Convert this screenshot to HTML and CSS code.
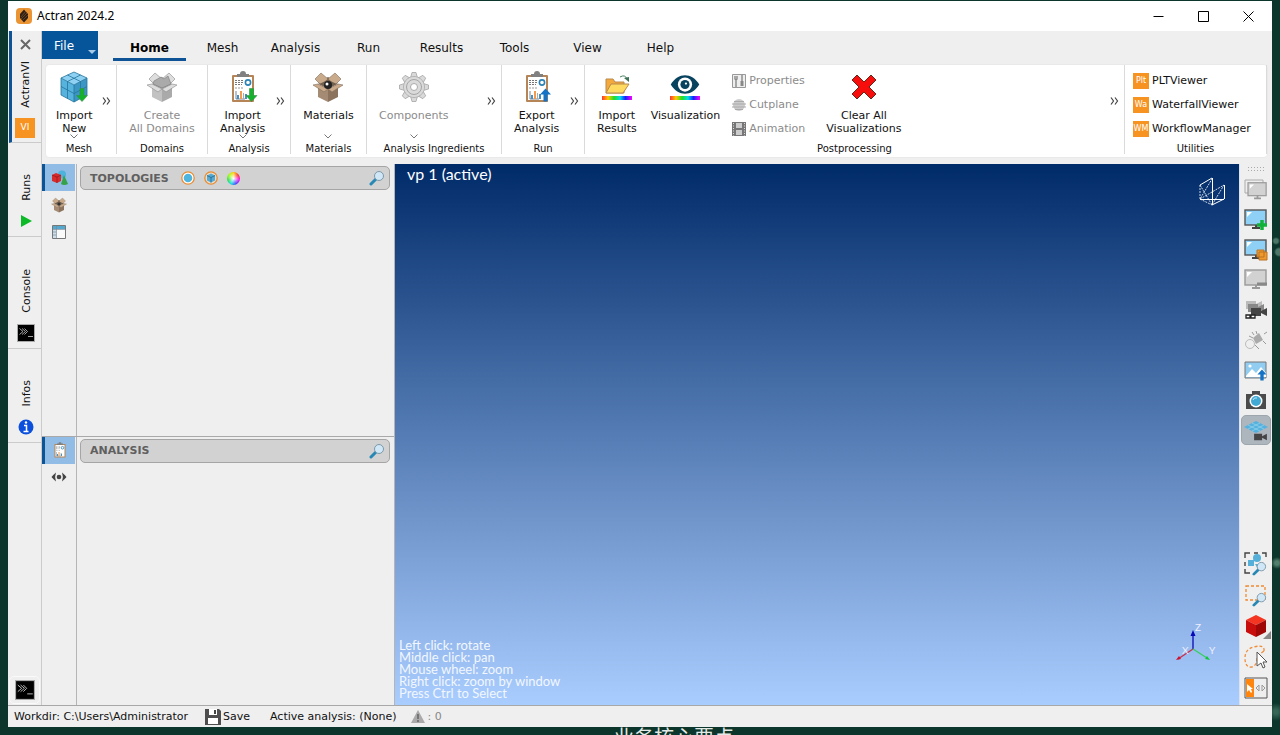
FILE: index.html
```html
<!DOCTYPE html>
<html lang="en">
<head>
<meta charset="utf-8">
<title>Actran 2024.2</title>
<link rel="stylesheet" href="styles.css">
</head>
<body>
<svg class="defs" aria-hidden="true">
  <defs>
    <linearGradient id="rainbow"><stop offset="0" stop-color="#f33"/><stop offset=".2" stop-color="#fc0"/><stop offset=".4" stop-color="#2d2"/><stop offset=".6" stop-color="#0de"/><stop offset=".78" stop-color="#12f"/><stop offset="1" stop-color="#f0f"/></linearGradient>
    <symbol id="box" viewBox="0 0 32 32">
      <path class="b-in" d="M6 12 16 6l10 6-10 5z"/>
      <path class="b-flap" d="M3 8 9 2l7 6-7 6zM29 8l-6-6-7 6 7 6z"/>
      <path class="b-in" d="M7 13 16 9l9 4-9 5z"/>
      <path class="b-body" d="M6 13l10 5v13L6 26z"/><path class="b-side" d="M26 13l-10 5v13l10-5z"/>
      <path class="b-flap" d="M6 13l10 5-4 3-11-7zM26 13l-10 5 4 3 11-7z"/>
    </symbol>
    <symbol id="clip" viewBox="0 0 32 32">
      <rect x="5" y="4" width="22" height="27" rx="1" fill="#b58457"/><rect x="7" y="6" width="18" height="23" fill="#fff"/>
      <path d="M10 6V3h3a3 3 0 0 1 6 0h3v3z" fill="#808080"/>
      <path d="M8 9.500h8M8 11.500h8M8 13.500h7" stroke="#777" stroke-dasharray="2 1"/><path d="M8 17h9" stroke="#999" stroke-dasharray="2 1"/>
      <circle cx="21" cy="11.500" r="2.600" fill="none" stroke="#2b83b8" stroke-width="1.600"/>
      <path d="M9 20v8h9" fill="none" stroke="#567" stroke-width=".8"/><path d="M11 24v4M19 23v5" stroke="#4790bd" stroke-width="2"/><path d="M14 20v8" stroke="#f29b4e" stroke-width="2"/><path d="M16.500 22v6" stroke="#aaa"/>
    </symbol>
    <symbol id="down" viewBox="0 0 12 14"><path d="M4 .5h4v7h3.500L6 13.500.5 7.500H4z" fill="#12b22c" stroke="#3a8b48" stroke-width=".6"/></symbol>
    <symbol id="up" viewBox="0 0 12 14"><path d="M4 13.500h4v-7h3.500L6 .5.5 6.500H4z" fill="#1473c4"/></symbol>
    <symbol id="chev" viewBox="0 0 8 5"><path d="M.5.5 4 4 7.500.5" fill="none" stroke="#777"/></symbol>
    <symbol id="more" viewBox="0 0 9 8"><path d="M1 .5 3.500 4 1 7.500M5 .5 7.500 4 5 7.500" fill="none" stroke="#444" stroke-width="1.200"/></symbol>
    <symbol id="glass" viewBox="0 0 16 16"><path d="M7 9 2 14" stroke="#2788b5" stroke-width="3" stroke-linecap="round"/><circle cx="10" cy="6" r="4.500" fill="#cfe7f7" stroke="#7d98a8"/></symbol>
    <symbol id="term" viewBox="0 0 18 18"><rect x=".5" y=".5" width="17" height="17" fill="#000" stroke="#aaa"/><path d="M2.500 4.500 6 7.500l-3.500 3M5 4.500l3.500 3L5 10.500M7.500 4.500l3 3-3 3M11 12.500h5" fill="none" stroke="#ccc" stroke-width=".8"/></symbol>
    <symbol id="eye" viewBox="0 0 30 20"><path d="M0 10C8-3 22-3 30 10 22 23 8 23 0 10z" fill="#07425e"/><circle cx="15" cy="10" r="7.500" fill="#fff"/><circle cx="15" cy="10" r="4.800" fill="#07425e"/><circle cx="16" cy="9" r="1.200" fill="#fff"/></symbol>
    <symbol id="screen" viewBox="0 0 24 22"><path d="M8 20h8M12 16v4" stroke="#444" stroke-width="2"/><rect x="1" y="2" width="21" height="15" fill="#8fd0f7" stroke="#555" stroke-width="1.400"/><path d="M3 4h5L3 9z" fill="#fff"/></symbol>
    <symbol id="gscreen" viewBox="0 0 24 22"><path d="M8 20h8M12 16v4" stroke="#999" stroke-width="2"/><rect x="1" y="2" width="21" height="15" fill="#d2d2d2" stroke="#999" stroke-width="1.400"/><path d="M3 4h5L3 9z" fill="#fff"/></symbol>
    <symbol id="cam" viewBox="0 0 16 10"><path d="M0 1h10v3l6-3v8l-6-3v3H0z"/></symbol>
  </defs>
</svg>
<div class="desktop">
<div class="window">
  <header class="titlebar">
    <svg class="i16" viewBox="0 0 16 16"><rect width="16" height="16" rx="4" fill="#eb9433"/><path d="M8 1.500 12 6v4l-4 4.500L4 10V6z" fill="#302118"/><path d="m5 9 5-6M5 11l6-6M7 12l5-5" stroke="#8a5a25" stroke-width=".6"/></svg>
    <h1>Actran 2024.2</h1>
    <div class="winbtns">
      <button aria-label="Minimize"><svg viewBox="0 0 11 11"><path d="M.5 5.500h10"/></svg></button>
      <button aria-label="Maximize"><svg viewBox="0 0 11 11"><path d="M.5.5h10v10H.5z"/></svg></button>
      <button aria-label="Close"><svg viewBox="0 0 11 11"><path d="m.5.5 10 10M10.500.5l-10 10"/></svg></button>
    </div>
  </header>
  <div class="body">
    <nav class="rail">
      <div class="railtab active">
        <button class="close" aria-label="Close tab"><svg viewBox="0 0 11 11"><path d="m1 1 9 9M10 1l-9 9" stroke="#666" stroke-width="2"/></svg></button>
        <button class="railbtn"><span class="vert">ActranVI</span><span class="badge">VI</span></button>
      </div>
      <button class="railtab"><span class="vert">Runs</span><svg class="i18" viewBox="0 0 18 18"><path d="m4 3 11 6-11 6z" fill="#0cba28"/></svg></button>
      <button class="railtab tall"><span class="vert">Console</span><svg class="i18"><use href="#term"/></svg></button>
      <button class="railtab"><span class="vert">Infos</span><svg class="i18" viewBox="0 0 18 18"><circle cx="9" cy="9" r="7.500" fill="#0b4fdc"/><path d="M7 7.500h2.500V13M6.500 13.500h5" fill="none" stroke="#fff" stroke-width="1.500"/><circle cx="9" cy="4.500" r="1.200" fill="#fff"/></svg></button>
      <button class="railterm" aria-label="Terminal"><svg class="i20"><use href="#term"/></svg></button>
    </nav>
    <div class="main">
      <nav class="tabs">
        <button class="file">File<svg viewBox="0 0 8 4"><path d="M0 0h8L4 4z" fill="#a9cbea"/></svg></button>
        <button class="tab on">Home</button><button class="tab">Mesh</button><button class="tab">Analysis</button><button class="tab">Run</button><button class="tab">Results</button><button class="tab">Tools</button><button class="tab">View</button><button class="tab">Help</button>
      </nav>
      <div class="ribbon">
        <section class="group g-mesh">
          <div class="tools">
            <button class="big"><svg class="i32" viewBox="0 0 32 32"><path d="M16 1 29 7 16 14 3 7z" fill="#8fd1f2"/><path d="M3 7l13 7v17L3 24z" fill="#55b3de"/><path d="M29 7 16 14v17l13-7z" fill="#3b96c4"/><path d="M16 1 29 7v17l-13 7-13-7V7zM3 7l13 7 13-7M16 14v17M9.500 4l13 6.500v17M22.500 4l-13 6.500v17M3 15.500l13 7 13-7" fill="none" stroke="#25759c" stroke-width=".8"/><use href="#down" x="18" y="17" width="12" height="14"/></svg><span>Import<br>New</span><svg class="chev"><use href="#chev"/></svg></button>
            <button class="more" aria-label="More mesh tools"><svg><use href="#more"/></svg></button>
          </div><h2>Mesh</h2>
        </section>
        <section class="group g-dom">
          <div class="tools"><button class="big dim" disabled><svg class="i32 graybox" viewBox="0 0 32 32"><use href="#box"/><path d="m8 10 7-4 3 2 4-3 3 8-9 4-9-4z" fill="#aaa" stroke="#777" stroke-width=".6"/></svg><span>Create<br>All Domains</span></button></div><h2>Domains</h2>
        </section>
        <section class="group g-ana">
          <div class="tools">
            <button class="big"><svg class="i32" viewBox="0 0 32 32"><use href="#clip"/><use href="#down" x="18" y="17" width="13" height="14"/></svg><span>Import<br>Analysis</span><svg class="chev"><use href="#chev"/></svg></button>
            <button class="more" aria-label="More analysis tools"><svg><use href="#more"/></svg></button>
          </div><h2>Analysis</h2>
        </section>
        <section class="group g-mat">
          <div class="tools"><button class="big"><svg class="i32 brownbox" viewBox="0 0 32 32"><use href="#box"/><circle cx="16" cy="14" r="4" fill="#222"/><circle cx="15" cy="13" r="1.500" fill="#fff"/></svg><span>Materials</span><svg class="chev"><use href="#chev"/></svg></button></div><h2>Materials</h2>
        </section>
        <section class="group g-ing">
          <div class="tools">
            <button class="big dim" disabled><svg class="i32" viewBox="0 0 32 32"><g fill="#dadada" stroke="#a5a5a5" stroke-width=".8"><path id="tooth" d="M12.500 7 14 1.500h4L19.500 7z"/><use href="#tooth" transform="rotate(45 16 16)"/><use href="#tooth" transform="rotate(90 16 16)"/><use href="#tooth" transform="rotate(135 16 16)"/><use href="#tooth" transform="rotate(180 16 16)"/><use href="#tooth" transform="rotate(225 16 16)"/><use href="#tooth" transform="rotate(270 16 16)"/><use href="#tooth" transform="rotate(315 16 16)"/><circle cx="16" cy="16" r="10.500"/></g><circle cx="16" cy="16" r="10" fill="#dadada"/><circle cx="16" cy="16" r="7.500" fill="none" stroke="#a5a5a5"/><circle cx="16" cy="16" r="3.500" fill="#fff" stroke="#aaa"/></svg><span>Components</span><svg class="chev"><use href="#chev"/></svg></button>
            <button class="more" aria-label="More ingredients"><svg><use href="#more"/></svg></button>
          </div><h2>Analysis Ingredients</h2>
        </section>
        <section class="group g-run">
          <div class="tools">
            <button class="big"><svg class="i32" viewBox="0 0 32 32"><use href="#clip"/><use href="#up" x="18" y="17" width="13" height="14"/></svg><span>Export<br>Analysis</span></button>
            <button class="more" aria-label="More run tools"><svg><use href="#more"/></svg></button>
          </div><h2>Run</h2>
        </section>
        <section class="group g-post">
          <div class="tools">
            <button class="big"><svg class="i32" viewBox="0 0 32 32"><path d="M5 8h7l2 3h9v11H5z" fill="#f4a93c" stroke="#b98a4c"/><path d="m10 13h18l-6 9H5z" fill="#ffda61" stroke="#b98a4c"/><path d="M19 6q5-3 7 2" fill="none" stroke="#4a8060"/><path d="m23 7 5-1v5z" fill="#3d7255"/><rect x="1" y="25" width="30" height="4" fill="url(#rainbow)"/></svg><span>Import<br>Results</span></button>
            <button class="big vis"><svg class="i32" viewBox="0 0 32 32"><use href="#eye" x="1" y="4" width="30" height="19"/><rect x="1" y="25" width="30" height="4" fill="url(#rainbow)"/></svg><span>Visualization</span></button>
            <div class="stack">
              <button class="dim" disabled><svg class="i14" viewBox="0 0 14 14"><path d="M.5.5h13v13H.5z" fill="#eee" stroke="#999"/><path d="M4 6v7M10 1v6M3 2v3l1 1 1-1V2" fill="none" stroke="#888" stroke-width="1.400"/><path d="M10 7v5" stroke="#888" stroke-width="3"/></svg>Properties</button>
              <button class="dim" disabled><svg class="i14" viewBox="0 0 14 14"><circle cx="7" cy="7" r="6" fill="#ccc"/><path d="M2 3.500h10M0 6h14M0 9h14M3 11.500h8" stroke="#aaa" stroke-width="1.200"/></svg>Cutplane</button>
              <button class="dim" disabled><svg class="i14" viewBox="0 0 14 14"><path d="M0 0h14v14H0z" fill="#777"/><path d="M4 1h6v5H4zM4 8h6v5H4z" fill="#ccc"/><path d="M1.500 1v13M12.500 1v13" stroke="#ddd" stroke-dasharray="1 1.500"/></svg>Animation</button>
            </div>
            <button class="big"><svg class="i32" viewBox="0 0 32 32"><path d="m9 4 7 7 7-7 5 5-7 7 7 7-5 5-7-7-7 7-5-5 7-7-7-7z" fill="#f80d0d" stroke="#5d2b1c"/></svg><span>Clear All<br>Visualizations</span></button>
            <button class="more" aria-label="More postprocessing tools"><svg><use href="#more"/></svg></button>
          </div><h2>Postprocessing</h2>
        </section>
        <section class="group g-util">
          <div class="tools"><div class="stack">
            <button><span class="badge sm">Plt</span>PLTViewer</button>
            <button><span class="badge sm">Wa</span>WaterfallViewer</button>
            <button><span class="badge sm">WM</span>WorkflowManager</button>
          </div></div><h2>Utilities</h2>
        </section>
      </div>
      <div class="work">
        <div class="panels">
          <section class="panel">
            <div class="ptabs">
              <button class="ptab sel" aria-label="Topologies"><svg class="i16" viewBox="0 0 16 16"><circle cx="10" cy="4.500" r="4" fill="#4db2dc"/><path d="m0 5 4-2 5 2v6l-4 2-5-2z" fill="#d92b2b"/><path d="m0 5 5 2v6M5 7l4-2" fill="none" stroke="#8d1720" stroke-width=".7"/><path d="m12 5 4 9q-4 2-7 0z" fill="#35a148"/></svg></button>
              <button class="ptab" aria-label="Materials"><svg class="i16 brownbox" viewBox="0 0 32 32"><use href="#box"/><circle cx="16" cy="14" r="3" fill="#333"/></svg></button>
              <button class="ptab" aria-label="Table"><svg class="i16" viewBox="0 0 16 16"><path d="M1.500 1.500h13v13h-13z" fill="#fafafa" stroke="#777"/><path d="M2 2h12v3H2z" fill="#54a8cf"/><path d="M2 5h3v9H2z" fill="#cdddeb"/><path d="M5.500 2v12M2 5.500h12M2 8h3M2 11h3" stroke="#789" stroke-width=".7"/></svg></button>
            </div>
            <div class="pcontent"><div class="phead"><h2>TOPOLOGIES</h2>
              <button aria-label="Surfaces"><svg class="i14" viewBox="0 0 14 14"><circle cx="7" cy="7" r="6.200" fill="#fff" stroke="#e88c32" stroke-width="1.300"/><circle cx="7" cy="7" r="4.300" fill="#4fb4de"/></svg></button>
              <button aria-label="Volumes"><svg class="i14" viewBox="0 0 14 14"><circle cx="7" cy="7" r="6.200" fill="#e9ddcd" stroke="#e88c32" stroke-width="1.300"/><path d="m7 2.500 4 2v5l-4 2-4-2v-5z" fill="#55aad4"/><path d="m3 4.500 4 2 4-2M7 6.500v5" fill="none" stroke="#226688" stroke-width=".8"/></svg></button>
              <button aria-label="Colors"><span class="wheel"></span></button>
              <button class="find" aria-label="Search topologies"><svg class="i16"><use href="#glass"/></svg></button></div></div>
          </section>
          <section class="panel second">
            <div class="ptabs">
              <button class="ptab sel" aria-label="Analysis"><svg class="i16"><use href="#clip"/></svg></button>
              <button class="ptab" aria-label="Visibility"><svg class="i16" viewBox="0 0 16 16"><path d="M5 3.500Q2.500 5.500.5 8q2 2.500 4.500 4.500-1.800-4.500 0-9zM11 3.500q2.500 2 4.500 4.500-2 2.500-4.500 4.500 1.800-4.500 0-9z" fill="#444"/><circle cx="8" cy="8" r="2.300" fill="#444"/></svg></button>
            </div>
            <div class="pcontent"><div class="phead"><h2>ANALYSIS</h2><button class="find" aria-label="Search analysis"><svg class="i16"><use href="#glass"/></svg></button></div></div>
          </section>
        </div>
        <main class="viewport">
          <div class="vtop"><span>vp 1 (active)</span>
            <svg width="28" height="32" viewBox="0 0 28 32" fill="none" stroke="#fff"><path d="M14.500 2v27M26.500 9v14M2 23.500h24M2 9l12-7M14 29l12-6"/><path d="M2 9v14L14 3M2 23 26 9M2 9l12 20L26 9M2 23l12 6" stroke-dasharray="2 1" stroke-width=".8"/></svg></div>
          <div class="vbot"><p>Left click: rotate<br>Middle click: pan<br>Mouse wheel: zoom<br>Right click: zoom by window<br>Press Ctrl to Select</p>
            <svg class="axes" width="42" height="44" viewBox="0 0 42 44"><path d="M18 27V11" stroke="#0808b8" stroke-width="1.300"/><path d="m18 8 2.500 6h-5z" fill="#0808b8"/><path d="M18 27 3 37" stroke="#c8304c" stroke-width="1.300"/><path d="m1 38 3-4 2 3z" fill="#d01030"/><path d="m18 27 14 9" stroke="#35d05d" stroke-width="1.300"/><path d="m35 38-5-1 2-3z" fill="#12c53c"/><text x="20" y="9">Z</text><text x="7" y="32">X</text><text x="34" y="32">Y</text></svg></div>
        </main>
        <aside class="vtools">
          <div class="grip"></div>
          <button aria-label="Viewports"><svg viewBox="0 0 24 24"><path d="M1 2h18v13H1z" fill="#eee" stroke="#aaa"/><use href="#gscreen" x="3" y="3" width="21" height="19"/></svg></button>
          <button aria-label="Add viewport"><svg viewBox="0 0 24 24"><use href="#screen" width="24" height="22"/><path d="M18 12v10M13 17h10" stroke="#12b13a" stroke-width="3.500"/></svg></button>
          <button aria-label="Duplicate viewport"><svg viewBox="0 0 24 24"><use href="#screen" width="24" height="22"/><path d="M13 12h7v7h-7zM15 14h8v8h-8z" fill="#ef9a2f" stroke="#b97322"/></svg></button>
          <button aria-label="Remove viewport"><svg viewBox="0 0 24 24"><use href="#gscreen" width="24" height="22"/><path d="M13 16h10" stroke="#888" stroke-width="3"/></svg></button>
          <button aria-label="Link cameras"><svg viewBox="0 0 24 24"><use href="#cam" x="2" y="2" width="16" height="10" fill="#bbb"/><use href="#cam" x="4" y="5" width="16" height="10" fill="#888"/><use href="#cam" x="7" y="9" width="16" height="10" fill="#444"/><path d="M2 17h4v3H2zM7 17h4v3H7z" fill="#fff" stroke="#222" stroke-width="1.300"/></svg></button>
          <button aria-label="Unlink"><svg viewBox="0 0 24 24"><path d="m9 10 6-5 4 7-7 4z" fill="#aaa"/><circle cx="6" cy="16" r="4.500" fill="none" stroke="#bbb"/><path d="m5 8 4 2M12 3l1 3M23 4l-3 2M19 13l3 3M11 17l4 4M8 4l2 3" stroke="#999"/></svg></button>
          <button aria-label="Export image"><svg viewBox="0 0 24 24"><path d="M1 4h21v16H1z" fill="#91cdf1" stroke="#777"/><path d="m2 18 6-7 4 4 5-6 5 6v4H2z" fill="#fff"/><circle cx="6" cy="8" r="1.600" fill="#fff"/><use href="#up" x="13" y="11" width="10" height="12"/></svg></button>
          <button aria-label="Snapshot"><svg viewBox="0 0 24 24"><path d="M2 6h6V3h8v3h6v15H2z" fill="#4b4b4b"/><circle cx="12" cy="13" r="6.500" fill="#fff"/><circle cx="12" cy="13" r="5" fill="#41a9d4"/><path d="M9 12q1-3 4-2" fill="none" stroke="#bfe6f7"/></svg></button>
          <button class="pressed" aria-label="Camera plane"><svg viewBox="0 0 24 24"><path d="m0 9 12-6 12 6-12 6z" fill="#55b1dd"/><path d="m4 7 12 6M8 5l12 6M4 11l12-6M8 13l12-6" stroke="#9bd6ee" stroke-width=".7"/><use href="#cam" x="9" y="15" width="15" height="8" fill="#444"/></svg></button>
          <button class="pushed" aria-label="Zoom all"><svg viewBox="0 0 24 24"><path d="M1 6V1h5M10 1h4M18 1h4v4M1 10v4M1 17v4h5" fill="none" stroke="#444" stroke-width="1.400"/><path d="M4 8h6v6H4zM11 12h6l-3 5z" fill="#54b0d8"/><circle cx="13" cy="6" r="4" fill="#54b0d8"/><use href="#glass" x="8" y="9" width="15" height="15"/></svg></button>
          <button aria-label="Zoom window"><svg viewBox="0 0 24 24"><path d="M2 3h19v14H2z" fill="none" stroke="#f08a32" stroke-width="1.300" stroke-dasharray="3 2"/><use href="#glass" x="8" y="9" width="15" height="15"/></svg></button>
          <button aria-label="Solid view"><svg viewBox="0 0 24 24"><path d="m2 6 10-5 10 5-10 5z" fill="#f33521"/><path d="m2 6 10 5v12L2 18z" fill="#c90d0d"/><path d="M22 6 12 11v12l10-5z" fill="#a00808"/></svg><i class="corner"></i></button>
          <button aria-label="Lasso select"><svg viewBox="0 0 24 24"><path d="M20 6Q21-1 10 2 1 4 1 13q0 10 7 9 5-2 5-8 1-4 7-8" fill="none" stroke="#ef8c3a" stroke-width="1.300" stroke-dasharray="3 2"/><path d="m13 7 10 10h-4l2 5-2 1-2-5-4 3z" fill="#fff" stroke="#555"/></svg></button>
          <button aria-label="Split select"><svg viewBox="0 0 24 24"><path d="M1 2h22v20H1z" fill="#eee" stroke="#555"/><path d="M2 3h8v18H2z" fill="#ff850f"/><path d="m3 8 6 5H7l1 3-1 1-2-3-2 2z" fill="#fff"/><path d="m15 9-3 3 3 3zM18 9l3 3-3 3z" fill="none" stroke="#999"/></svg></button>
        </aside>
      </div>
    </div>
  </div>
  <footer class="status">
    <span>Workdir: C:\Users\Administrator</span>
    <button class="save"><svg class="i16" viewBox="0 0 16 16"><path d="M0 0h14l2 2v14H0z" fill="#4e4e4e"/><path d="M4 0h8v6H4zM3 9h10v6H3z" fill="#fff"/><path d="M9 1h2v4H9z" fill="#444"/></svg>Save</button>
    <span class="act">Active analysis: (None)</span>
    <span class="warn"><svg class="i14" viewBox="0 0 14 14"><path d="m7 0 7 13H0z" fill="#aaa"/><path d="M7 4v5M7 10v2" stroke="#666" stroke-width="1.500"/></svg>: 0</span>
  </footer>
</div>
<div class="caption">业务核心要点</div>
</div>
</body>
</html>
```
FILE: styles.css
```css
* { box-sizing: border-box; }
body { margin: 0; font: 11px/13px "DejaVu Sans", sans-serif; color: #111; }
button { font: inherit; color: inherit; background: none; border: 0; padding: 0; margin: 0; }
h1, h2, p { margin: 0; font-weight: normal; }
svg { display: block; flex: none; }
.defs { position: absolute; width: 0; height: 0; }
.i14 { width: 14px; height: 14px; }
.i16 { width: 16px; height: 16px; }
.i18 { width: 18px; height: 18px; }
.i20 { width: 20px; height: 20px; }
.i32 { width: 32px; height: 32px; }

.desktop {
  height: 100vh; display: flex; flex-direction: column; padding: 1px 8px 0; overflow: hidden;
  background:
    radial-gradient(circle at 1276px 241px, #4c7768 0 2px, transparent 4px),
    radial-gradient(circle at 1279px 252px, #4c7768 0 3px, transparent 5px),
    radial-gradient(circle at 1277px 563px, #52806e 0 2px, transparent 6px),
    radial-gradient(circle at 1276px 712px, #376657 0 2px, transparent 9px),
    #0c352b;
}
.window { flex: 1; min-height: 0; display: flex; flex-direction: column; background: #efefef; }
.caption { height: 8px; flex: none; overflow: hidden; text-align: center; padding-left: 68px; color: #e3e9e5; font: 20px/20px "Noto Sans CJK SC", sans-serif; }

.titlebar { height: 30px; flex: none; display: flex; align-items: center; gap: 5px; padding: 0 1px 0 8px; background: #fff; }
.titlebar h1 { font: 12px/16px "Noto Sans", sans-serif; color: #000; }
.winbtns { margin-left: auto; display: flex; }
.winbtns button { width: 45px; height: 28px; display: grid; place-items: center; }
.winbtns svg { width: 11px; height: 11px; fill: none; stroke: #000; }

.body { flex: 1; min-height: 0; display: flex; }
.rail { width: 34px; flex: none; display: flex; flex-direction: column; border-right: 1px solid #cbcbcb; }
.railtab { height: 94px; display: flex; flex-direction: column; align-items: center; justify-content: flex-end; gap: 11px; padding: 0 0 6px 3px; border-bottom: 1px solid #cbcbcb; }
.railtab.tall { height: 112px; }
.railtab.active { height: 112px; margin-left: 1px; border-left: 3px solid #0d5396; padding: 8px 3px 5px 0; justify-content: space-between; }
.railbtn { display: flex; flex-direction: column; align-items: center; gap: 10px; }
.vert { writing-mode: vertical-rl; transform: rotate(180deg); }
.close svg { width: 11px; height: 11px; }
.badge { width: 20px; height: 20px; display: grid; place-items: center; background: #f79421; color: #fff; font-size: 9px; }
.badge.sm { width: 16px; height: 16px; font-size: 8px; }
.railterm { margin: auto 0 1px 1px; height: 28px; width: 31px; display: grid; place-items: center; border: 1px solid #fafafa; border-radius: 5px; }

.main { flex: 1; min-width: 0; display: flex; flex-direction: column; }
.tabs { display: flex; height: 30px; align-items: flex-start; font-size: 12px; }
.file { width: 56px; height: 28px; margin-right: 15px; padding: 3px 2px 0 12px; background: #06559a; color: #fff; display: flex; align-items: center; justify-content: space-between; }
.file svg { width: 8px; height: 4px; align-self: flex-end; margin-bottom: 5px; }
.tab { width: 73px; height: 30px; padding-top: 8px; border-bottom: 3px solid transparent; }
.tab.on { font-weight: bold; border-color: #0d5396; color: #000; }

.ribbon { display: flex; margin: 3px 4px 6px 3px; padding: 0 0 3px; background: #fff; border: 1px solid #e9e9e9; border-radius: 4px; }
.group { display: flex; flex-direction: column; border-right: 1px solid #dadada; }
.group h2 { text-align: center; font-size: 10px; line-height: 11px; }
.tools { display: flex; height: 78px; padding-top: 6px; }
.big { position: relative; display: flex; flex-direction: column; align-items: center; justify-content: flex-start; }
.big span { margin-top: 6px; white-space: nowrap; }
.chev { position: absolute; bottom: 4px; width: 8px; height: 5px; }
.dim { color: #8b8b8b; }
.more { margin-left: auto; padding: 0 5px 12px 0; }
.more svg { width: 9px; height: 8px; }
.g-mesh { width: 71px; } .g-mesh .tools { padding-left: 10px; } .g-mesh h2 { padding-right: 4px; }
.g-dom { width: 91px; } .g-dom .tools, .g-mat .tools { justify-content: center; }
.g-ana { width: 83px; } .g-ana .tools, .g-ing .tools, .g-run .tools { padding-left: 12px; }
.g-mat { width: 76px; }
.g-ing { width: 135px; }
.g-run { width: 83px; }
.g-post { flex: 1; } .g-post .tools { padding-left: 12px; }
.g-util { width: 142px; } .g-util .tools { padding-left: 8px; }
.vis { margin: 0 12px 0 14px; }
.stack { display: flex; flex-direction: column; gap: 7px; padding-top: 1px; margin-right: 21px; }
.stack button { display: flex; align-items: center; gap: 3px; height: 17px; white-space: nowrap; }
.graybox { --flap: #ddd; --in: #aaa; --body: #c2c2c2; --side: #aaa; --line: #8a8a8a; }
.brownbox { --flap: #c9ab8b; --in: #72604f; --body: #a58b73; --side: #8c735e; --line: #816b57; }
.b-flap { fill: var(--flap); stroke: var(--line); stroke-width: .6px; }
.b-in { fill: var(--in); }
.b-body { fill: var(--body); }
.b-side { fill: var(--side); }

.work { flex: 1; min-height: 0; display: flex; }
.panels { width: 353px; flex: none; display: flex; flex-direction: column; border-right: 1px solid #b5b5b5; }
.panel { flex: 272 0 0; display: flex; }
.panel.second { flex-grow: 269; border-top: 1px solid #a9a9a9; }
.ptabs { width: 35px; padding-right: 1px; border-right: 1px solid #b5b5b5; }
.ptab { width: 33px; height: 27px; display: grid; place-items: center; }
.ptab.sel { background: #90bce5; border-left: 3px solid #0d5396; }
.pcontent { flex: 1; padding: 2px 4px 0 3px; }
.phead { height: 24px; display: flex; align-items: center; gap: 9px; padding: 0 4px 0 9px; background: #d2d2d2; border: 1px solid #a5a5a5; border-radius: 5px; color: #606060; }
.phead h2 { font-size: 11px; font-weight: bold; margin-right: 3px; }
.find { margin-left: auto; }
.wheel { display: block; width: 13px; height: 13px; border-radius: 50%; background: radial-gradient(circle, #fff, transparent 70%), conic-gradient(#fc0, #f22, #e0e, #33f, #0dd, #2d3, #9f0, #fc0); }

.viewport { flex: 1; min-width: 0; display: flex; flex-direction: column; justify-content: space-between; color: #fff; background: linear-gradient(#002b69, #aacdff); font-family: Lato, sans-serif; border-right: 1px solid #d9e2ef; }
.vtop { display: flex; justify-content: space-between; padding: 1px 13px 0 12px; font-size: 16px; line-height: 18px; }
.vtop svg { margin-top: 11px; }
.vbot { display: flex; justify-content: space-between; align-items: flex-end; padding: 0 22px 6px 4px; font-size: 13px; line-height: 12px; color: #f2f7ff; }
.axes { margin-bottom: 33px; font-size: 10px; fill: #eef; }
.vtools { width: 32px; flex: none; display: flex; flex-direction: column; align-items: center; padding-bottom: 2px; }
.vtools button { position: relative; width: 30px; height: 30px; flex: none; display: grid; place-items: center; }
.vtools svg { width: 24px; height: 24px; }
.grip { width: 18px; height: 6px; margin: 2px 0 3px; background: radial-gradient(circle, #aaa 0 1px, transparent 1px) 0 0 / 3px 3px; }
.vtools .pressed { background: #adb5bd; border: 1px solid #9da5ad; border-radius: 5px; }
.vtools .pushed { margin-top: auto; }
.pushed ~ button { margin-top: 1px; }
.corner { position: absolute; right: 0; bottom: 2px; border: 4px solid; border-color: transparent #888 #888 transparent; }

.status { height: 22px; flex: none; display: flex; align-items: center; padding-left: 6px; border-top: 1px solid #a8a8a8; }
.save { display: flex; align-items: center; gap: 2px; margin: 0 20px 0 17px; }
.warn { display: flex; align-items: center; gap: 3px; margin-left: 14px; color: #888; }
```
